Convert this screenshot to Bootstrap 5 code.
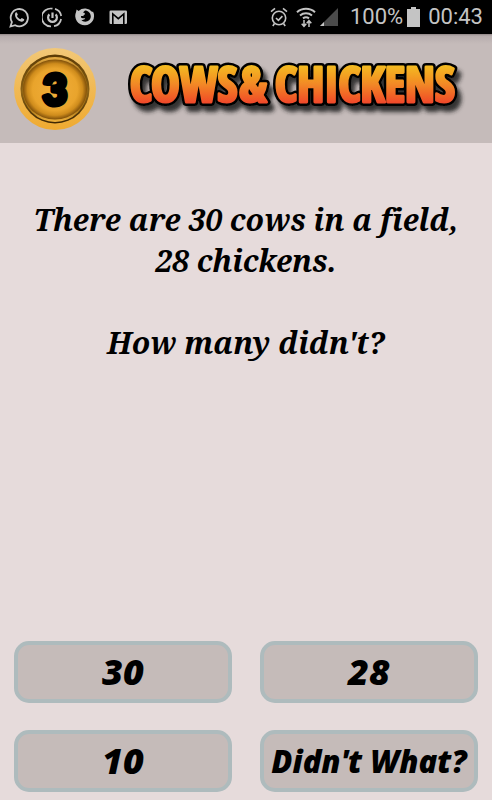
<!DOCTYPE html>
<html lang="en">
<head>
<meta charset="utf-8">
<meta name="viewport" content="width=device-width, initial-scale=1">
<title>Cows &amp; Chickens</title>
<link href="https://cdn.jsdelivr.net/npm/bootstrap@5.3.0/dist/css/bootstrap.min.css" rel="stylesheet">
<style>
body { background: #e6dbdb; color: #000; }
.status-bar { background: #000; color: #c4c4c4; height: 34px; padding: 0 9px; font: 22px/34px Roboto, sans-serif; }
.status-icons { gap: 12px; }
.level-header { background: linear-gradient(#8f8585 0, #b7adad 2px, #c5bbba 10px); padding: 14px 34px 13px 14px; gap: 30px; }
.level-badge { width: 82px; }
.question { font: italic bold 30px/41px "Noto Serif", "Droid Serif", "Liberation Serif", serif; font-variant-ligatures: none; padding: 56px 16px; }
.answers { padding: 0 14px 8px; }
.answers .row { --bs-gutter-x: 28px; --bs-gutter-y: 27px; }
.answer { background: #c5bbb9; border: 4px solid #aebbbd; border-radius: 15px; height: 62px; font: italic 800 36px/52px "Open Sans", sans-serif; padding: 0; color: #000; white-space: nowrap; }
.answer:hover { background: #bbb0ae; border-color: #9eb0b3; color: #000; }
.answer-long { font-size: 31px; }
</style>
<script src="https://cdn.jsdelivr.net/npm/bootstrap@5.3.0/dist/js/bootstrap.bundle.min.js"></script>
</head>
<body class="min-vh-100 d-flex flex-column">
<div class="status-bar d-flex align-items-center justify-content-between">
  <div class="status-icons d-flex align-items-center">
    <svg width="21" height="21" viewBox="0 0 21 21" fill="none" stroke="#c4c4c4" stroke-width="1.8" aria-label="WhatsApp"><path d="M1.5 19.5 2.9 15A8.6 8.6 0 1 1 6.2 18.2Z"/><path d="M6.2 6.2c.7-1.4 1.5-1.2 2 0l.7 1.6-1 1.3c1 1.8 1.9 2.6 3.6 3.2l1.2-1.3 2.5 1.2c.2 1.7-1.3 2.7-2.8 2.5-3.6-.8-7.3-4.5-6.2-8.5Z" fill="#c4c4c4" stroke="none"/></svg>
    <svg width="21" height="21" viewBox="0 0 21 21" fill="none" stroke="#c4c4c4" aria-label="Security"><path d="M13 1.9A8.9 8.9 0 0 1 19.2 9M19.1 12A8.9 8.9 0 0 1 12 19.2M9 19.3A8.9 8.9 0 1 1 10.5 1.7" stroke-width="1.7"/><path d="M7.4 7.4a4.4 4.4 0 1 0 6.2 0M10.5 5.5v5.5" stroke-width="2.2"/></svg>
    <svg width="21" height="21" viewBox="0 0 21 21" aria-label="Firefox"><path d="M1 5.2 1.6 2.4l2 1.5A9.3 9.3 0 0 1 17.2 5l.8-.4A9.4 9.4 0 1 1 1 5.2Z" fill="#c4c4c4"/><path d="M10 3.4c3 0 5.8 2.6 5.8 5.9 0 3.400-2.600 5.400-5.400 5.400-2 0-3.300-.8-4.200-2 1.700.5 3-.1 4-1-.6-.8-1.400-.5-2.300-.4-1.300.1-2.200-.8-1.900-2 .8-.6 1.500-.4 2.300 0 0-1 .6-1.500 1.700-2.100L9.600 6 8 5.600Z" fill="#000"/></svg>
    <svg width="21" height="21" viewBox="0 0 21 21" aria-label="Mail"><rect x="1.5" y="3.5" width="17.5" height="13.5" rx="1.3" fill="#c4c4c4"/><path d="M4.800 17V7l5.500 4.600L15.800 7V17" fill="none" stroke="#000" stroke-width="1.6"/></svg>
  </div>
  <div class="d-flex align-items-center">
    <svg class="me-2" width="18" height="20" viewBox="0 0 18 20" fill="none" stroke="#c4c4c4" stroke-width="1.6" aria-label="Alarm"><circle cx="9" cy="11" r="6.7"/><path d="m1 4.7 4-3.3m8 0 4 3.3M4.5 16.5 2.8 19m10.7-2.5 1.7 2.5M6 11l2.4 2.3 4-4.2"/></svg>
    <svg class="me-1" width="20" height="22" viewBox="0 0 20 22" fill="none" stroke="#c4c4c4" stroke-width="2" aria-label="Wi-Fi"><path d="M1 6.2C6 1.6 14 1.6 19 6.2M4 9.5c3.5-3 8.5-3 12 0M7 12.4c2-1.5 4-1.5 6 0"/><path d="M8 14v6m-2.3-2.2L8 20.3l2.3-2.5M13 21v-6m-2.3 2.3 2.3-2.6 2.3 2.6" stroke-width="1.5"/></svg>
    <svg width="18" height="18" viewBox="0 0 18 18" aria-label="Signal"><path d="M0 18 18 0v18Z" fill="#4b4b4b"/><path d="m0 18 4-4v4Z" fill="#c4c4c4"/></svg>
    <span class="ms-2 ps-1">100%</span>
    <svg class="ms-1 me-2" width="13" height="20" viewBox="0 0 13 20" aria-label="Battery"><path d="M0 2h4V0h5v2h4v18H0Z" fill="#c4c4c4"/></svg>
    <span>00:43</span>
  </div>
</div>
<header class="level-header d-flex align-items-center">
  <svg class="level-badge flex-shrink-0" viewBox="0 0 82 82" role="img" aria-label="Level 3">
    <defs>
      <linearGradient id="rim" x2="0" y2="1"><stop stop-color="#f2c878"/><stop offset="1" stop-color="#efaa30"/></linearGradient>
      <linearGradient id="groove" x2="0" y2="1"><stop stop-color="#5b3b06"/><stop offset=".55" stop-color="#8b6216"/><stop offset="1" stop-color="#3d2602"/></linearGradient>
      <linearGradient id="lip" x2="0" y2="1"><stop stop-color="#e6ad45"/><stop offset=".3" stop-color="#9b6a12"/><stop offset=".8" stop-color="#a87414"/><stop offset="1" stop-color="#f1b33e"/></linearGradient>
      <radialGradient id="face"><stop stop-color="#f0ae3b"/><stop offset=".7" stop-color="#e9a42c"/><stop offset=".86" stop-color="#cf8c1c"/><stop offset="1" stop-color="#80500a"/></radialGradient>
    </defs>
    <circle cx="41" cy="41" r="41" fill="url(#rim)"/>
    <circle cx="41" cy="41" r="34.5" fill="url(#groove)"/>
    <circle cx="41" cy="41.5" r="32.5" fill="url(#lip)"/>
    <ellipse cx="41" cy="41.5" rx="32" ry="30" fill="url(#face)"/>
    <text x="41" y="57" text-anchor="middle" font-family="Lato, sans-serif" font-weight="900" font-size="42" stroke="#000" stroke-width="5" stroke-linejoin="round">3</text>
  </svg>
  <h1 class="flex-grow-1 m-0 lh-1">
    <svg class="w-100 d-block overflow-visible" viewBox="0 0 334 82">
      <defs><linearGradient id="fire" gradientUnits="userSpaceOnUse" x1="0" y1="14" x2="0" y2="58"><stop stop-color="#f4c51f"/><stop offset=".5" stop-color="#f28a25"/><stop offset="1" stop-color="#f0402a"/></linearGradient>
      <filter id="shade" x="-5%" y="-20%" width="112%" height="150%"><feDropShadow dx="4" dy="6" stdDeviation="2" flood-color="#222" flood-opacity=".9"/></filter></defs>
      <g filter="url(#shade)" stroke-linejoin="round">
        <g id="wordmark" fill="url(#fire)" font-family="'Noto Sans ExtraCondensed', 'Liberation Sans Narrow', 'Open Sans Condensed', 'DejaVu Sans Condensed', sans-serif" font-weight="900" font-size="48">
          <g stroke="#000" stroke-width="8"><use href="#words"/></g>
          <g id="words"><text x="4" y="54">COWS</text><text x="114" y="54">&amp;</text><text x="150" y="54">CHICKENS</text></g>
          <g stroke="url(#fire)" stroke-width="3"><use href="#words"/></g>
        </g>
      </g>
    </svg>
  </h1>
</header>
<main class="flex-grow-1 d-flex flex-column justify-content-between">
  <div class="question text-center">
    <p class="m-0">There are 30 cows in a field,<br>28 chickens.</p>
    <br>
    <p class="m-0">How many didn't?</p>
  </div>
  <div class="answers"><div class="row">
    <div class="col-6"><button type="button" class="btn answer w-100">30</button></div>
    <div class="col-6"><button type="button" class="btn answer w-100">28</button></div>
    <div class="col-6"><button type="button" class="btn answer w-100">10</button></div>
    <div class="col-6"><button type="button" class="btn answer answer-long w-100">Didn't What?</button></div>
  </div></div>
</main>
</body>
</html>
